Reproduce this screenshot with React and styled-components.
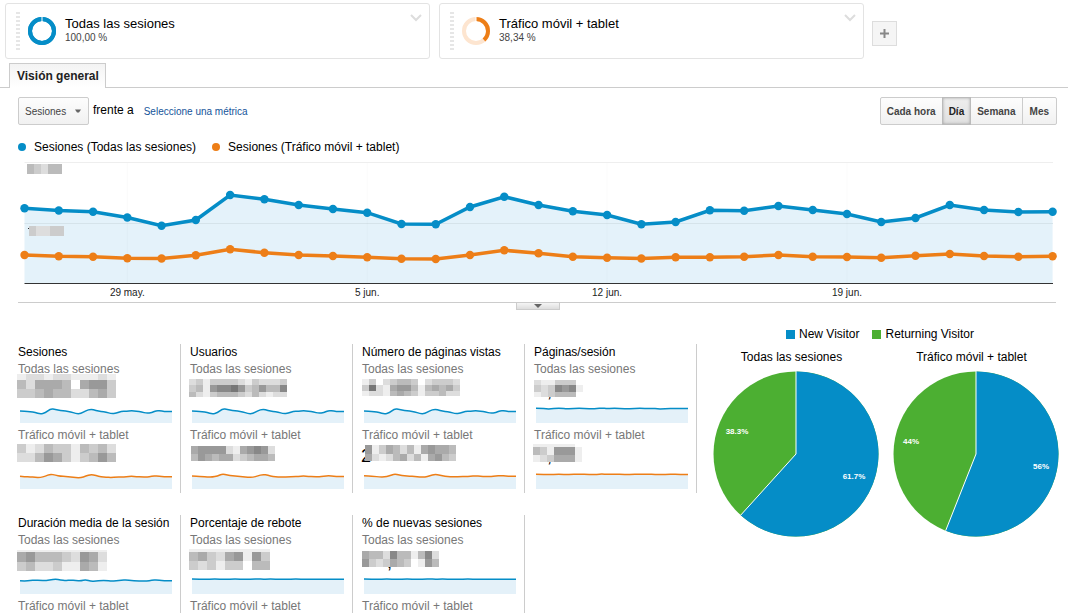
import React from "react"
import styled, { createGlobalStyle, css } from "styled-components"

const BLUE = "#058dc7"
const ORANGE = "#ed7e17"
const GREEN = "#4caf32"

const GlobalStyle = createGlobalStyle`
  * {
    box-sizing: border-box;
  }

  body {
    margin: 0;
    background: #fff;
    color: #000;
    font: 12px/16px "Liberation Sans", Arial, sans-serif;
  }

  button, select {
    font-family: inherit;
  }

  h2, h3, p {
    margin: 0;
    font-size: 12px;
    font-weight: normal;
  }

  svg {
    display: block;
  }
`

const Segments = styled.header`
  display: flex;
  align-items: center;
  padding: 3px 8px 0 5px;
`

const Card = styled.section`
  display: flex;
  flex: 0 1 425px;
  align-items: center;
  height: 56px;
  margin-right: 9px;
  padding: 0 7px 0 10px;
  border: 1px solid #e3e3e3;
  border-radius: 3px;
`

const Grip = styled.span`
  width: 4px;
  height: 38px;
  margin-right: 8px;
  background: repeating-linear-gradient(#e6e6e6 0 2px, #fff 2px 4px);
`

const CardText = styled.div`
  flex: 1;
  margin-left: 9px;
  line-height: 14px;
`

const CardTitle = styled.h2`
  font-size: 13px;
`

const CardShare = styled.p`
  color: #444;
  font-size: 10px;
`

const CardMenu = styled.button`
  align-self: flex-start;
  margin-top: 10px;
  padding: 0;
  border: 0;
  background: none;
`

const AddButton = styled.button`
  display: grid;
  place-items: center;
  width: 25px;
  height: 25px;
  margin-left: -1px;
  margin-top: 4px;
  padding: 0;
  border: 1px solid #ddd;
  background: #f5f5f5;
`

const Tabs = styled.nav`
  display: flex;
  height: 25px;
  margin-top: 4px;
  padding-left: 9px;
  border-bottom: 1px solid #ccc;
`

const Tab = styled.a`
  height: 25px;
  padding: 0 6px 0 7px;
  border: 1px solid #ccc;
  border-bottom: 0;
  background: linear-gradient(#f3f3f3, #fff);
  color: #222;
  font-weight: bold;
  line-height: 24px;
  text-decoration: none;
`

const Toolbar = styled.div`
  display: flex;
  align-items: center;
  margin: 9px 11px 0 18px;
`

const SelectBox = styled.label`
  display: grid;
  align-items: center;
  width: 71px;
  height: 28px;
  border: 1px solid #ccc;
  border-radius: 2px;
  background: linear-gradient(#fdfdfd, #f1f1f1);

  > * {
    grid-area: 1 / 1;
  }

  svg {
    justify-self: end;
    margin-right: 7px;
    pointer-events: none;
  }
`

const Select = styled.select`
  width: 100%;
  height: 26px;
  padding: 1px 0 0 6px;
  border: 0;
  appearance: none;
  background: transparent;
  color: #444;
  font-size: 10px;
`

const Versus = styled.span`
  margin: 0 10px 2px 4px;
`

const MetricLink = styled.a`
  flex: 1;
  padding-top: 2px;
  color: #15549a;
  font-size: 10px;
  text-decoration: none;
`

const Period = styled.button`
  height: 28px;
  margin-left: -1px;
  padding: 0 6px;
  border: 1px solid #ccc;
  background: linear-gradient(#fdfdfd, #f1f1f1);
  color: #444;
  font-size: 10px;
  font-weight: bold;

  &:first-child {
    border-radius: 2px 0 0 2px;
  }

  &:last-child {
    padding: 0 7px;
    border-radius: 0 2px 2px 0;
  }

  ${(props) =>
    props.$active &&
    css`
      position: relative;
      border-color: #bbb;
      background: linear-gradient(#eee, #e0e0e0);
      box-shadow: inset 0 0 3px rgba(0, 0, 0, 0.3);
      color: #222;
    `}
`

const Periods = styled.div`
  display: flex;
`

const ChartLegend = styled.div`
  display: flex;
  gap: 16px;
  margin: 14px 18px 0;
`

const LegendItem = styled.span`
  display: flex;
  align-items: center;
  gap: ${(props) => (props.$round ? 8 : 4)}px;

  &::before {
    content: "";
    width: ${(props) => (props.$round ? 8 : 9)}px;
    height: ${(props) => (props.$round ? 8 : 9)}px;
    border-radius: ${(props) => (props.$round ? "50%" : 0)};
    background: ${(props) => props.$color};
  }
`

const ChartBox = styled.div`
  margin: 3px 12px 0 18px;
  border-bottom: 1px solid #ccc;
`

const Drawing = styled.svg`
  width: 100%;
  overflow: visible;
`

const ChartFoot = styled.div`
  display: flex;
  justify-content: center;
  padding: 0 11px 0 19px;
`

const Collapse = styled.button`
  display: grid;
  place-items: center;
  width: 44px;
  height: 7px;
  padding: 0;
  border: 1px solid #ccc;
  border-top: 0;
  background: linear-gradient(#f5f5f5, #ddd);
`

const Lower = styled.div`
  display: flex;
  gap: 16px;
  margin: 16px 9px 0 18px;
`

const Metrics = styled.div`
  display: grid;
  flex: 1;
  grid-template-columns: repeat(4, minmax(0, 1fr));
  gap: 22px 9px;
  margin-top: 18px;
`

const MetricCell = styled.section`
  padding-right: 8px;
  border-right: 1px solid #ccc;
  line-height: 17px;
  white-space: nowrap;
`

const MetricTitle = styled.h3`
  line-height: 17px;
`

const SegmentName = styled.p`
  color: #777;
`

const Value = styled.svg`
  height: 27px;
  overflow: visible;
`

const SparkBox = styled.div`
  height: 22px;
  margin-left: 2px;
`

const Visitors = styled.section`
  flex: 0 0 346px;
`

const PieLegend = styled.div`
  display: flex;
  gap: 13px;
  margin-left: 73px;
`

const Pies = styled.div`
  display: grid;
  grid-template-columns: 1fr 1fr;
  gap: 14px;
  margin-top: 7px;
`

const PieTitle = styled.h3`
  padding-right: 9px;
  margin-bottom: 6px;
  text-align: center;
`

const all = [
  74.7, 72.5, 71.3, 65.5, 57.3, 63, 88, 83.7, 78, 74, 70.3, 59, 58.7, 76, 86.3, 78,
  71.7, 68, 58.7, 61, 72.7, 72.3, 77, 73, 69, 61, 65, 78, 73, 71, 71.3,
]
const mobile = [
  28, 26.7, 26.3, 24.7, 24.5, 27.7, 33.7, 30.3, 28, 27, 25.7, 24.3, 24, 28, 32.7, 29.7,
  26.3, 25.3, 24.5, 25.7, 25.7, 26.3, 28, 26.3, 26, 25.3, 27.3, 29, 27, 26.3, 26.7,
]
const steady = [
  5, 5, 3, 3, 5, 5, 3, 4, 5, 5, 4, 3, 4, 6, 4, 5, 5, 4, 3, 4, 5, 5, 4, 5, 3, 3, 4, 5, 4, 4, 4,
]
const duration = [
  4, 3, 5, 6, 6, 4, 7, 10, 7, 5, 6, 5, 4, 8, 2, 3, 5, 5, 3, 4, 6, 7, 5, 4, 3, 3, 6, 7, 5, 4, 4,
]

const ticks = [
  { day: 3, label: "29 may." },
  { day: 10, label: "5 jun." },
  { day: 17, label: "12 jun." },
  { day: 24, label: "19 jun." },
]

// each row: [y, height, one grey hex digit per cell]
const metrics = [
  {
    title: "Sesiones",
    first: { x: -1, cell: 9, rows: [[-4, 6, "eddeddeeedef"], [2, 9, "bdaaabfa99c"], [11, 9, "ccbabbddbac"]] },
    second: { x: -1, cell: 9, rows: [[0, 9, "cedbccebcbd"], [9, 9, "ddb9acecb9b"]] },
    blue: [all, 3.7, 0.17],
    orange: [mobile, 3, 0.38],
  },
  {
    title: "Usuarios",
    first: { x: -1, cell: 7, rows: [[1, 6, "dceccccdecdddc"], [7, 7, "cbe98879cb9bb8"], [14, 5, "bdecbbbcdbdedd"]] },
    second: { x: 1, cell: 7, rows: [[2, 8, "a9999dea989d"], [10, 7, "b9abaadcbaab"]] },
    blue: [all, 3.7, 0.17],
    orange: [mobile, 3, 0.34],
  },
  {
    title: "Número de páginas vistas",
    first: { x: 0, cell: 7, rows: [[1, 6, "ecfdcbbcfdcccd"], [7, 6, "c7dea99bebabac"], [13, 5, "eddebabceccbdd"]] },
    second: {
      x: 3,
      cell: 7,
      rows: [[1, 9, "9ecabdbea9aab"], [10, 7, "adedbadbea9bc"]],
      glyph: { x: -1, y: 18, text: "2" },
    },
    blue: [all, 3.7, 0.17],
    orange: [mobile, 3, 0.32],
  },
  {
    title: "Páginas/sesión",
    first: {
      x: 0,
      cell: 7,
      rows: [[2, 5, "deecccf"], [7, 7, "cdc898e"], [14, 5, "edcbbbf"]],
      glyph: { x: 13, y: 19, text: "," },
    },
    second: {
      x: -1,
      cell: 7,
      rows: [[0, 3, "eeeeeef"], [3, 8, "bce999e"], [11, 7, "edcaaae"]],
      glyph: { x: 13, y: 18, text: "," },
    },
    blue: [steady, 3, 0.3],
    orange: [steady, 3, 0.2],
  },
  {
    title: "Duración media de la sesión",
    first: { x: -1, cell: 9, rows: [[1, 2, "eeeeeeeeeef"], [3, 10, "a9bbbcd9ad"], [13, 9, "cbddceeabe"]] },
    blue: [duration, 3, 0.3],
  },
  {
    title: "Porcentaje de rebote",
    first: { x: -1, cell: 9, rows: [[0, 3, "eeeeeeeee"], [3, 9, "bacda9e9c"], [12, 9, "cdceccfbb"]] },
    blue: [steady, 3, 0.1],
  },
  {
    title: "% de nuevas sesiones",
    first: {
      x: 0,
      cell: 7,
      rows: [[2, 8, "abbd8bbeb8df"], [10, 8, "9cdcabcfe9bf"]],
      glyph: { x: 25, y: 19, text: "," },
    },
    blue: [steady, 3, 0.1],
  },
]

const Cells = ({ x, cell, rows }) =>
  rows.map(([y, height, tones]) =>
    [...tones].map((tone, i) => (
      <rect key={`${y}-${i}`} x={x + i * cell} y={y} width={cell} height={height} fill={`#${tone.repeat(3)}`} />
    ))
  )

const HiddenValue = ({ x, cell, rows, glyph }) => (
  <Value width="125" height="27" shapeRendering="crispEdges" aria-hidden="true">
    {glyph && <text x={glyph.x} y={glyph.y} fontSize="18">{glyph.text}</text>}
    <Cells x={x} cell={cell} rows={rows} />
  </Value>
)

// rounds the corners by running curves through the midpoints
const smooth = (pts) => {
  let d = `M${pts[0]}`
  for (let i = 1; i < pts.length - 1; i++) {
    const [x, y] = pts[i]
    const [nx, ny] = pts[i + 1]
    d += `Q${x},${y} ${(x + nx) / 2},${(y + ny) / 2}`
  }
  return `${d}L${pts[pts.length - 1]}`
}

const Spark = ({ data: [series, top, scale], color }) => {
  const max = Math.max(...series)
  const line = smooth(series.map((v, i) => [(i * 152) / 30, top + (max - v) * scale]))
  return (
    <SparkBox>
      <Drawing viewBox="0 0 152 19" aria-hidden="true">
        <path d={`${line}V18H0Z`} fill="#e4f1f9" />
        <path d={line} fill="none" stroke={color} strokeWidth="1.5" />
      </Drawing>
    </SparkBox>
  )
}

const AXIS = 125
const dayX = (i) => 6.5 + i * 34.27

const Series = ({ values, color }) => (
  <g fill={color}>
    <polyline points={values.map((v, i) => `${dayX(i)},${AXIS - v}`).join(" ")} fill="none" stroke={color} strokeWidth="3.5" />
    {values.map((v, i) => (
      <circle key={i} cx={dayX(i)} cy={AXIS - v} r="4.2" />
    ))}
  </g>
)

const Chart = () => (
  <ChartBox>
    <Drawing viewBox="0 0 1038 144" role="img" aria-label="Sesiones por día">
      <path d="M6.5 4.5H1035" stroke="#eee" />
      <path d={`M${dayX(0)},125L${all.map((v, i) => `${dayX(i)},${AXIS - v}`).join("L")}V125Z`} fill="#e4f2fa" />
      <path d="M6.5 65.5H1035" stroke="#d5e3ea" />
      {ticks.map((t) => (
        <path key={t.day} d={`M${dayX(t.day)} 5V125`} stroke="#000" strokeOpacity="0.02" />
      ))}
      <g shapeRendering="crispEdges">
        <Cells x={9} cell={7} rows={[[6, 10, "bcdbbf"]]} />
        <path d="M10 70h2v1h-2z" fill="#333" />
        <Cells x={11} cell={7} rows={[[68, 10, "cddcc"]]} />
      </g>
      <Series values={all} color={BLUE} />
      <Series values={mobile} color={ORANGE} />
      <path d="M6.5 125.5H1035" stroke="#333" />
      {ticks.map((t) => (
        <text key={t.day} x={dayX(t.day)} y="138" fontSize="10" fill="#222" textAnchor="middle">
          {t.label}
        </text>
      ))}
    </Drawing>
  </ChartBox>
)

const Donut = ({ share, color, rest }) => (
  <svg width="28" height="28" fill="none" strokeWidth="4" aria-hidden="true">
    <circle cx="14" cy="14" r="12" stroke={rest} />
    <circle cx="14" cy="14" r="12" stroke={color} pathLength="100" strokeDasharray={`${share} 100`} transform="rotate(-90 14 14)" />
    <path d="M14 0V5" stroke="#fff" strokeWidth="1" />
  </svg>
)

const Segment = ({ name, percent, share, color, rest }) => (
  <Card>
    <Grip />
    <Donut share={share} color={color} rest={rest} />
    <CardText>
      <CardTitle>{name}</CardTitle>
      <CardShare>{percent}</CardShare>
    </CardText>
    <CardMenu aria-label={`Opciones de ${name}`}>
      <svg width="12" height="8">
        <path d="M1 1L6 6L11 1" fill="none" stroke="#ddd" strokeWidth="2" />
      </svg>
    </CardMenu>
  </Card>
)

const Pie = ({ title, share, labels }) => {
  const angle = share * 2 * Math.PI
  const x = 83 + 82.5 * Math.sin(angle)
  const y = 83 - 82.5 * Math.cos(angle)
  return (
    <div>
      <PieTitle>{title}</PieTitle>
      <Drawing viewBox="0 0 166 166" role="img" aria-label={title}>
        <circle cx="83" cy="83" r="82.5" fill={GREEN} />
        <path d={`M83 83V0.5A82.5 82.5 0 1 1 ${x} ${y}Z`} fill={BLUE} />
        <path d={`M83 0V83L${x} ${y}`} fill="none" stroke="#fff" />
        {labels.map((l) => (
          <text key={l.text} x={l.x} y={l.y} fill="#fff" fontSize="8" fontWeight="bold" textAnchor="middle">
            {l.text}
          </text>
        ))}
      </Drawing>
    </div>
  )
}

const Metric = ({ title, first, second, blue, orange }) => (
  <MetricCell>
    <MetricTitle>{title}</MetricTitle>
    <SegmentName>Todas las sesiones</SegmentName>
    <HiddenValue {...first} />
    <Spark data={blue} color={BLUE} />
    <SegmentName>Tráfico móvil + tablet</SegmentName>
    {second && <HiddenValue {...second} />}
    {orange && <Spark data={orange} color={ORANGE} />}
  </MetricCell>
)

const App = () => (
  <main>
    <GlobalStyle />
    <Segments>
      <Segment name="Todas las sesiones" percent="100,00 %" share={100} color={BLUE} rest={BLUE} />
      <Segment name="Tráfico móvil + tablet" percent="38,34 %" share={38.34} color={ORANGE} rest="#fde5d0" />
      <AddButton aria-label="Añadir segmento">
        <svg width="9" height="9">
          <path d="M4.5 0V9M0 4.5H9" stroke="#888" strokeWidth="2" />
        </svg>
      </AddButton>
    </Segments>

    <Tabs>
      <Tab href="#vision-general">Visión general</Tab>
    </Tabs>

    <Toolbar>
      <SelectBox>
        <Select aria-label="Métrica" defaultValue="Sesiones">
          <option>Sesiones</option>
        </Select>
        <svg width="6" height="4">
          <path d="M0 0.5H6L4 3.5H2Z" fill="#666" />
        </svg>
      </SelectBox>
      <Versus>frente a</Versus>
      <MetricLink href="#metrica">Seleccione una métrica</MetricLink>
      <Periods>
        <Period>Cada hora</Period>
        <Period $active>Día</Period>
        <Period>Semana</Period>
        <Period>Mes</Period>
      </Periods>
    </Toolbar>

    <ChartLegend>
      <LegendItem $round $color={BLUE}>Sesiones (Todas las sesiones)</LegendItem>
      <LegendItem $round $color={ORANGE}>Sesiones (Tráfico móvil + tablet)</LegendItem>
    </ChartLegend>
    <Chart />
    <ChartFoot>
      <Collapse aria-label="Contraer gráfico">
        <svg width="8" height="4">
          <path d="M0 0H8L4 4Z" fill="#666" />
        </svg>
      </Collapse>
    </ChartFoot>

    <Lower>
      <Metrics>
        {metrics.map((m) => (
          <Metric key={m.title} {...m} />
        ))}
      </Metrics>
      <Visitors>
        <PieLegend>
          <LegendItem $color={BLUE}>New Visitor</LegendItem>
          <LegendItem $color={GREEN}>Returning Visitor</LegendItem>
        </PieLegend>
        <Pies>
          <Pie
            title="Todas las sesiones"
            share={0.617}
            labels={[{ x: 141, y: 108, text: "61.7%" }, { x: 24, y: 63, text: "38.3%" }]}
          />
          <Pie
            title="Tráfico móvil + tablet"
            share={0.56}
            labels={[{ x: 148, y: 98, text: "56%" }, { x: 18, y: 73, text: "44%" }]}
          />
        </Pies>
      </Visitors>
    </Lower>
  </main>
)

export default App
